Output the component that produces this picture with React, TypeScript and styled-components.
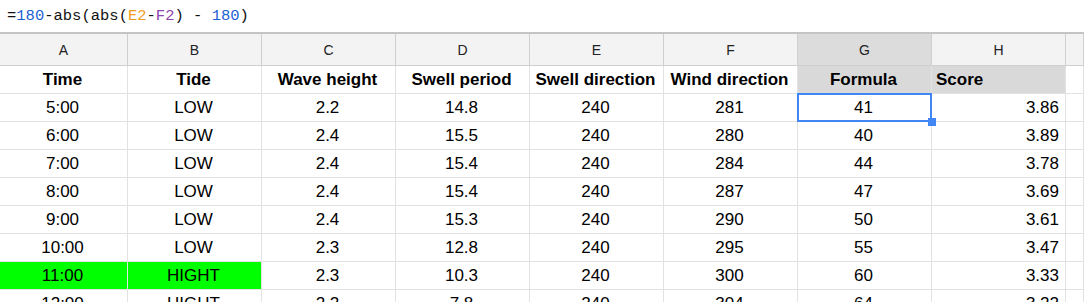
import React from 'react'
import styled, { createGlobalStyle } from 'styled-components'

const COLUMNS = ['A', 'B', 'C', 'D', 'E', 'F', 'G', 'H']
const HEADINGS = ['Time', 'Tide', 'Wave height', 'Swell period', 'Swell direction', 'Wind direction', 'Formula', 'Score']

const ROWS = [
  ['5:00', 'LOW', '2.2', '14.8', '240', '281', '41', '3.86'],
  ['6:00', 'LOW', '2.4', '15.5', '240', '280', '40', '3.89'],
  ['7:00', 'LOW', '2.4', '15.4', '240', '284', '44', '3.78'],
  ['8:00', 'LOW', '2.4', '15.4', '240', '287', '47', '3.69'],
  ['9:00', 'LOW', '2.4', '15.3', '240', '290', '50', '3.61'],
  ['10:00', 'LOW', '2.3', '12.8', '240', '295', '55', '3.47'],
  ['11:00', 'HIGHT', '2.3', '10.3', '240', '300', '60', '3.33'],
  ['12:00', 'HIGHT', '2.2', '7.8', '240', '304', '64', '3.22'],
]

const HIGHLIGHT_ROW = 6
const SELECTED_COL = 6

type Align = 'left' | 'center' | 'right'

const GlobalStyle = createGlobalStyle`
  html, body {
    margin: 0;
    padding: 0;
    background: #fff;
    overflow: hidden;
  }
  body {
    font-family: 'Liberation Sans', Arial, sans-serif;
  }
`

const Page = styled.div`
  width: 1084px;
  height: 302px;
  overflow: hidden;
  display: flex;
  flex-direction: column;
`

const FormulaBar = styled.div`
  height: 34px;
  flex-shrink: 0;
  display: flex;
  align-items: center;
  padding: 0 0 1px 7px;
  box-sizing: border-box;
  border-bottom: 2px solid #c4c4c4;
  font-family: 'Liberation Mono', 'DejaVu Sans Mono', monospace;
  font-size: 15.5px;
  color: #111;
  white-space: pre;
`

const Token = styled.span<{ $kind: 'num' | 'ref1' | 'ref2' }>`
  color: ${(p) => (p.$kind === 'num' ? '#1c5fd3' : p.$kind === 'ref1' ? '#f29a1c' : '#8e44ad')};
`

const Sheet = styled.div`
  display: grid;
  grid-template-columns: 128px repeat(7, 134px) 1fr;
  grid-template-rows: 32px;
  grid-auto-rows: 28px;
`

const ColumnLetter = styled.div<{ $selected?: boolean }>`
  box-sizing: border-box;
  display: flex;
  align-items: center;
  justify-content: center;
  background: ${(p) => (p.$selected ? '#dcdcdc' : '#f3f3f3')};
  border-right: 1px solid #cfcfcf;
  border-bottom: 1px solid #cfcfcf;
  font-size: 14px;
  color: #222;
`

const Cell = styled.div<{ $align?: Align; $bold?: boolean; $bg?: string }>`
  position: relative;
  box-sizing: border-box;
  display: flex;
  align-items: center;
  justify-content: ${(p) =>
    p.$align === 'right' ? 'flex-end' : p.$align === 'left' ? 'flex-start' : 'center'};
  padding: 1px 6px 0 4px;
  background: ${(p) => p.$bg || '#fff'};
  border-right: 1px solid #e2e2e2;
  border-bottom: 1px solid #e2e2e2;
  font-size: 17px;
  font-weight: ${(p) => (p.$bold ? 700 : 400)};
  color: #000;
  white-space: nowrap;
  overflow: visible;
`

const Selection = styled.div`
  position: absolute;
  top: -1px;
  left: -1px;
  right: -1px;
  bottom: -1px;
  border: 2px solid #4285f4;
  pointer-events: none;
  z-index: 1;
`

const FillHandle = styled.div`
  position: absolute;
  right: -5px;
  bottom: -5px;
  width: 8px;
  height: 8px;
  background: #4285f4;
  z-index: 2;
`

const Formula = () => (
  <FormulaBar>
    =<Token $kind="num">180</Token>-abs(abs(<Token $kind="ref1">E2</Token>-<Token $kind="ref2">F2</Token>) -{' '}
    <Token $kind="num">180</Token>)
  </FormulaBar>
)

export default function App() {
  return (
    <Page>
      <GlobalStyle />
      <Formula />
      <Sheet>
        {COLUMNS.map((c, i) => (
          <ColumnLetter key={c} $selected={i === SELECTED_COL}>
            {c}
          </ColumnLetter>
        ))}
        <ColumnLetter />

        {HEADINGS.map((h, i) => (
          <Cell key={h} $bold $align={i === 7 ? 'left' : 'center'} $bg={i >= 6 ? '#d9d9d9' : undefined}>
            {h}
          </Cell>
        ))}
        <Cell />

        {ROWS.map((row, r) => (
          <React.Fragment key={r}>
            {row.map((v, c) => (
              <Cell
                key={c}
                $align={c === 7 ? 'right' : 'center'}
                $bg={r === HIGHLIGHT_ROW && c < 2 ? '#00ff00' : undefined}
              >
                {v}
                {r === 0 && c === SELECTED_COL && (
                  <>
                    <Selection />
                    <FillHandle />
                  </>
                )}
              </Cell>
            ))}
            <Cell />
          </React.Fragment>
        ))}
      </Sheet>
    </Page>
  )
}
